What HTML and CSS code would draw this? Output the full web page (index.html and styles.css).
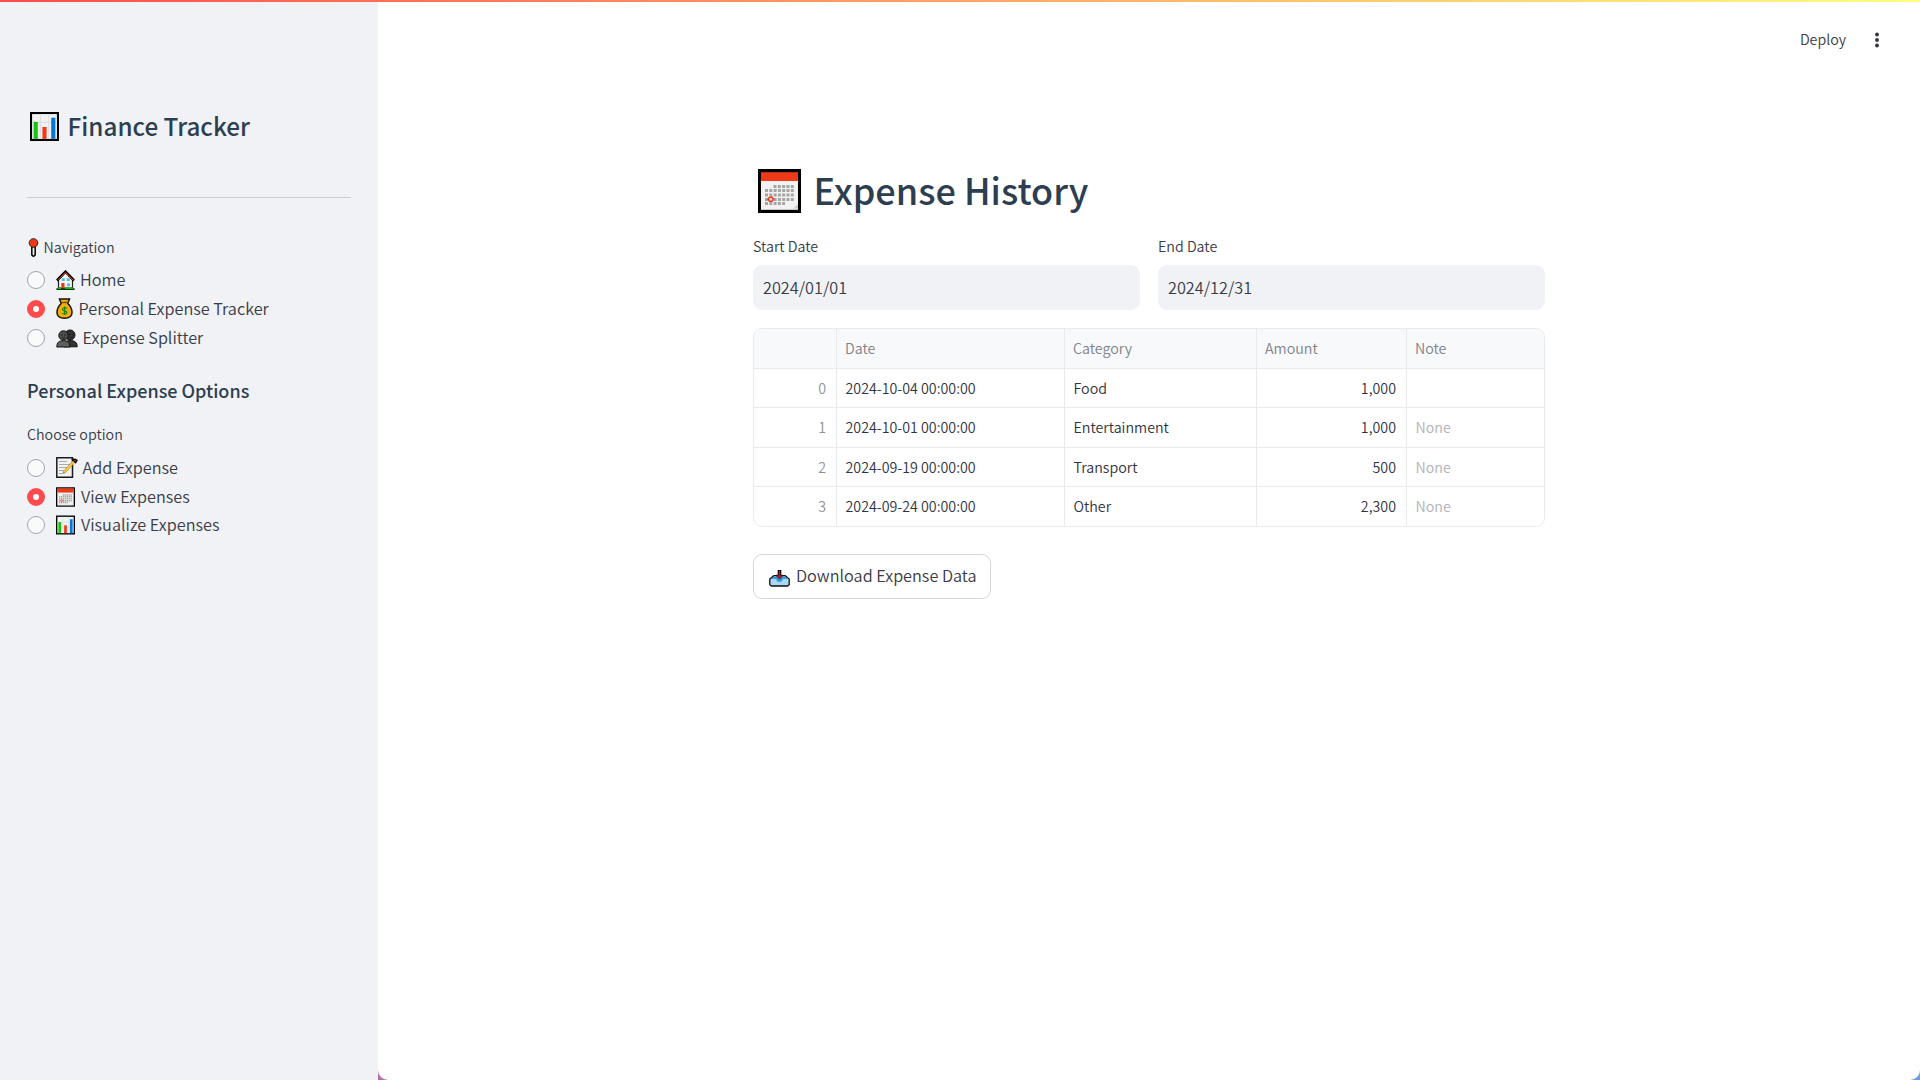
FILE: index.html
```html
<!DOCTYPE html>
<html lang="en">
<head>
<meta charset="utf-8">
<title>Finance Tracker</title>
<link rel="stylesheet" href="styles.css">
</head>
<body>
<svg class="defs" width="0" height="0" aria-hidden="true">
  <symbol id="chart" viewBox="0 0 28 28">
    <rect width="28" height="28" fill="#000"/><rect x="2" y="2" width="24" height="24" fill="#f2f2f2"/>
    <path d="M2 10h24M2 18h24M10 2v24M18 2v24" stroke="#dedede" fill="none"/>
    <path d="M3.500 9.500h4V26h-4z" fill="#16c60c"/><path d="M12 14.500h4V26h-4z" fill="#f03a17"/><path d="M20.500 5.500h4V26h-4z" fill="#0078d7"/>
  </symbol>
  <symbol id="calendar" viewBox="0 0 43 44">
    <rect width="43" height="44" fill="#000"/><rect x="3" y="3" width="37" height="38" fill="#f2f2f2"/>
    <rect x="3" y="3" width="37" height="9" fill="#f03a17"/><path d="M3 3.500h37" stroke="#bb321c"/>
    <path d="M15.500 17.500h21M7 21.500h29M7 26h29M7 30.500h29M7 34.500h20" stroke="#a5a5a5" stroke-width="3" stroke-dasharray="3 1.300" fill="none"/>
    <circle cx="12.800" cy="30.200" r="2.200" fill="#ddd" stroke="#f03a17" stroke-width="1.400"/><path d="M9 30h1.500M15 30h1.500" stroke="#f03a17"/>
    <path d="M3 40.500h37" stroke="#c8c8c8"/><path d="M35.500 39.500l4.500-4.500v4.500z" fill="#ccc"/>
  </symbol>
  <symbol id="pin" viewBox="0 0 10 18">
    <path d="M3.400 8h3.200v8L5 17.500 3.400 16z" fill="#eee" stroke="#000" stroke-width="1.400"/><circle cx="5" cy="4.700" r="4.100" fill="#f03a17" stroke="#222" stroke-width=".9"/>
  </symbol>
  <symbol id="house" viewBox="0 0 19 20">
    <path d="M2.500 18V9l7-7L16.500 9v9z" fill="#f5f5f5" stroke="#222" stroke-width="1.200"/>
    <path d="M1 10.500L9.500 1.700 18 10.500" fill="none" stroke="#000" stroke-width="2.600"/><path d="M2 10.200L9.500 2.600 17 10.200" fill="none" stroke="#f03a17" stroke-width="1"/>
    <path d="M5.700 8.300h3v2.800h-3zM10.800 8.300h3v2.800h-3zM11 13.200h3v3h-3z" fill="#4cc2f1"/><path d="M5.300 13h3.200v5H5.300z" fill="#e73a1c"/>
    <path d="M.5 19h18" stroke="#063b08" stroke-width="2"/><path d="M1.500 18.300h3.500M9 18.300h8.500" stroke="#16b80c" stroke-width="1.400"/>
  </symbol>
  <symbol id="bag" viewBox="0 0 17 21">
    <path d="M3.500 1h10l-1.700 4.500C14.500 8 16 11 16 14.500c0 4-3 5.700-7.500 5.700S1 18.500 1 14.500C1 11 2.500 8 5.200 5.500z" fill="#f5ad08" stroke="#151515" stroke-width="1.500"/>
    <path d="M4.500 4.500h8" stroke="#6b4b08" stroke-width="1.300"/>
    <path d="M10.800 10.500c-1-1.300-4.300-1-4.300.9 0 1.900 4.300 1.100 4.300 3 0 1.800-3.500 2-4.500.6M8.600 8.500v8.500" fill="none" stroke="#168914" stroke-width="1.200"/>
  </symbol>
  <symbol id="people" viewBox="0 0 22 19">
    <circle cx="14" cy="6" r="5" fill="#333" stroke="#111"/><path d="M8 17.800c0-4 2-6.300 6-6.300 5 0 7.200 2 7.200 6.300z" fill="#333" stroke="#111"/>
    <circle cx="7.500" cy="6.500" r="4.700" fill="#4e4e4e" stroke="#111"/><path d="M.8 18c0-4.500 2-6.300 6.500-6.300s6.700 1.800 6.700 6.300z" fill="#5e5e5e" stroke="#111"/>
    <path d="M5.700 5.500v1.300M9 5.500v1.300M13.700 4.800v1.300M16.500 4.800v1.300M5.700 8.500q1.700 1.400 3.400 0M13.500 8.500q1.700 1 3 0" stroke="#111" stroke-width=".9" fill="none"/>
  </symbol>
  <symbol id="memo" viewBox="0 0 22 21">
    <path d="M.8.8h15.700v19.400H.8z" fill="#f2f2f2" stroke="#1b1b1b" stroke-width="1.500"/>
    <path d="M3 4.500h8M3 7.500h11M3 10.500h8M3 13.500h5M3 16.500h4" stroke="#aaa"/>
    <path d="M8 15.500L18 4.500" stroke="#9a7a35" stroke-width="2.700"/><path d="M8 15.500L18 4.500" stroke="#ffc83d" stroke-width="1.900"/>
    <path d="M6.700 16.800l.8-2 1.400 1.200z" fill="#777"/><path d="M16.500 2.500l3.200 3.200L21 3.200l-2-1z" fill="#d13438" stroke="#000" stroke-width="1.300"/>
  </symbol>
  <symbol id="inbox" viewBox="0 0 21 17">
    <path d="M.8 9l4-3.300h11.400l4 3.300v5.700L18.500 16h-16L.8 14.700z" fill="#a9d8f5" stroke="#111" stroke-width="1.300"/>
    <path d="M1.800 9l3.800-2.600h9.800L19.200 9h-5.400c0 4-6.600 4-6.600 0z" fill="#3a96dd"/>
    <path d="M10.500 0v6" stroke="#000" stroke-width="3.600"/><path d="M6.800 5.200h7.400l-3.700 3.900z" fill="#b1122b" stroke="#111" stroke-width=".7"/><path d="M10.500 1v7" stroke="#d5132e" stroke-width="1.500"/>
  </symbol>
</svg>
<div class="app">
  <aside class="sidebar">
    <h2 class="brand"><svg class="brand-icon"><use href="#chart"/></svg><span>Finance Tracker</span></h2>
    <hr class="rule">
    <div class="label nav-label"><svg class="pin-icon"><use href="#pin"/></svg><span>Navigation</span></div>
    <div class="radios">
      <div class="radio"><i class="dot"></i><svg class="emoji house"><use href="#house"/></svg><span>Home</span></div>
      <div class="radio"><i class="dot on"></i><svg class="emoji bag"><use href="#bag"/></svg><span>Personal Expense Tracker</span></div>
      <div class="radio"><i class="dot"></i><svg class="emoji people"><use href="#people"/></svg><span>Expense Splitter</span></div>
    </div>
    <h3 class="section">Personal Expense Options</h3>
    <div class="label">Choose option</div>
    <div class="radios options">
      <div class="radio"><i class="dot"></i><svg class="emoji memo"><use href="#memo"/></svg><span>Add Expense</span></div>
      <div class="radio"><i class="dot on"></i><svg class="emoji square"><use href="#calendar"/></svg><span>View Expenses</span></div>
      <div class="radio"><i class="dot"></i><svg class="emoji square"><use href="#chart"/></svg><span>Visualize Expenses</span></div>
    </div>
  </aside>
  <div class="backdrop">
    <main class="main">
      <header class="toolbar"><span>Deploy</span><svg class="kebab" viewBox="0 0 4 16"><circle cx="2" cy="2.500" r="1.900"/><circle cx="2" cy="8" r="1.900"/><circle cx="2" cy="13.500" r="1.900"/></svg></header>
      <div class="content">
        <h1 class="title"><svg class="title-icon"><use href="#calendar"/></svg><span>Expense History</span></h1>
        <div class="dates">
          <div class="field"><div class="label">Start Date</div><div class="input">2024/01/01</div></div>
          <div class="field"><div class="label">End Date</div><div class="input">2024/12/31</div></div>
        </div>
        <div class="table">
          <div class="row head"><div></div><div>Date</div><div>Category</div><div>Amount</div><div>Note</div></div>
          <div class="row"><div class="num index">0</div><div>2024-10-04 00:00:00</div><div>Food</div><div class="num">1,000</div><div></div></div>
          <div class="row"><div class="num index">1</div><div>2024-10-01 00:00:00</div><div>Entertainment</div><div class="num">1,000</div><div class="none">None</div></div>
          <div class="row"><div class="num index">2</div><div>2024-09-19 00:00:00</div><div>Transport</div><div class="num">500</div><div class="none">None</div></div>
          <div class="row"><div class="num index">3</div><div>2024-09-24 00:00:00</div><div>Other</div><div class="num">2,300</div><div class="none">None</div></div>
        </div>
        <div class="button"><svg class="inbox-icon"><use href="#inbox"/></svg><span>Download Expense Data</span></div>
      </div>
    </main>
  </div>
</div>
<div class="decoration"></div>
</body>
</html>
```
FILE: styles.css
```css
* { box-sizing: border-box; }
body {
  margin: 0;
  font-family: "Noto Sans CJK SC", "Open Sans", sans-serif;
  font-weight: 350;
  font-size: 16.25px;
  color: #393b47;
  background: #fff;
}
h1, h2, h3 { margin: 0; font-weight: 500; color: #2c3e50; white-space: nowrap; }
.defs { position: absolute; }
.decoration {
  position: absolute; top: 0; left: 0; right: 0; height: 2px;
  background: linear-gradient(90deg, #ff4b4b, #fffd80);
}
.app { display: flex; height: 1080px; }

.sidebar { width: 378px; flex: none; padding: 109px 27px 0; background: #f0f2f6; }
.brand { display: flex; height: 32px; font-size: 24.25px; line-height: 34px; }
.brand-icon { width: 29px; height: 29px; margin: 3px 8.6px 0 3px; }
.rule { height: 1px; border: 0; margin: 56px 0 38px; background: #cccdd3; }
.label { height: 24px; font-size: 14.25px; line-height: 24px; }
.nav-label { display: flex; line-height: 22px; }
.pin-icon { width: 11px; height: 19px; margin: 2px 4.500px 0 1px; }
.radios { margin-top: 6px; }
.options { margin-top: 7px; }
.radio { display: flex; height: 29px; line-height: 27px; white-space: nowrap; }
.options .radio { height: 28.500px; line-height: 28.200px; }
.dot {
  width: 18px; height: 18px; flex: none; margin: 5px 11px 0 0;
  border: 1px solid #a3a4ad; border-radius: 50%; background: #f9fafc;
}
.options .dot { margin-top: 6px; }
.dot.on { border: 6px solid #ff4b4b; background: #fff; }
.emoji { flex: none; height: 20px; margin-top: 4px; }
.house { width: 19px; margin-right: 5px; }
.bag { width: 17px; height: 21px; margin-right: 5.500px; margin-top: 3px; }
.people { width: 22px; height: 19px; margin-right: 4.600px; margin-top: 5px; }
.memo { width: 22px; height: 21px; margin-right: 4.500px; }
.square { width: 19px; margin-right: 6px; margin-top: 5px; }
.section { margin: 24px 0 19px; font-size: 18px; line-height: 26px; }

.backdrop { flex: 1; background: linear-gradient(90deg, #b96cab, #6f9be0); }
.main { height: 1080px; border-radius: 0 0 10px 10px; background: #fff; }
.toolbar {
  display: flex; justify-content: flex-end; align-items: center; gap: 29px;
  height: 80px; padding-right: 41px; font-size: 14.25px; line-height: 20px;
}
.toolbar span { padding-bottom: 2px; }
.kebab { width: 4px; height: 16px; fill: #31333f; }
.content { width: 792px; margin: 84px auto 0; }
.title { display: flex; font-size: 36px; line-height: 50px; }
.title-icon { width: 43px; height: 44px; margin: 5px 12.500px 0 5px; }
.dates { display: flex; gap: 18px; margin-top: 21px; }
.field { flex: 1; }
.field .label { height: 30px; line-height: 22px; }
.input { height: 45px; padding-left: 10px; border-radius: 9px; background: #f0f2f6; line-height: 44px; }
.table {
  height: 199px; margin-top: 18px; border: 1px solid #e9eaec; border-radius: 9px;
  overflow: hidden; font-size: 14.25px; color: #31333f;
}
.row { display: grid; grid-template-columns: 83px 228px 192px 150px 1fr; height: 39.4px; line-height: 38px; }
.row > div { padding: 0 10px 0 8.500px; border-right: 1px solid #e9eaec; border-bottom: 1px solid #e9eaec; white-space: nowrap; }
.row > div:last-child { border-right: 0; }
.row:last-child > div { border-bottom: 0; }
.row.head { height: 40px; background: #f8f9fb; color: #808289; line-height: 38px; }
.row.head > div { padding-left: 8px; }
.num { text-align: right; }
.row .index { color: #8f9197; }
.row .none { color: #b0b1b6; }
.button {
  display: inline-flex; width: 238px; height: 45px; margin-top: 27px; padding-left: 15px;
  border: 1px solid #d5d6d9; border-radius: 9px; line-height: 41px; white-space: nowrap;
}
.inbox-icon { width: 21px; height: 17px; margin: 15px 6px 0 0; }
```
